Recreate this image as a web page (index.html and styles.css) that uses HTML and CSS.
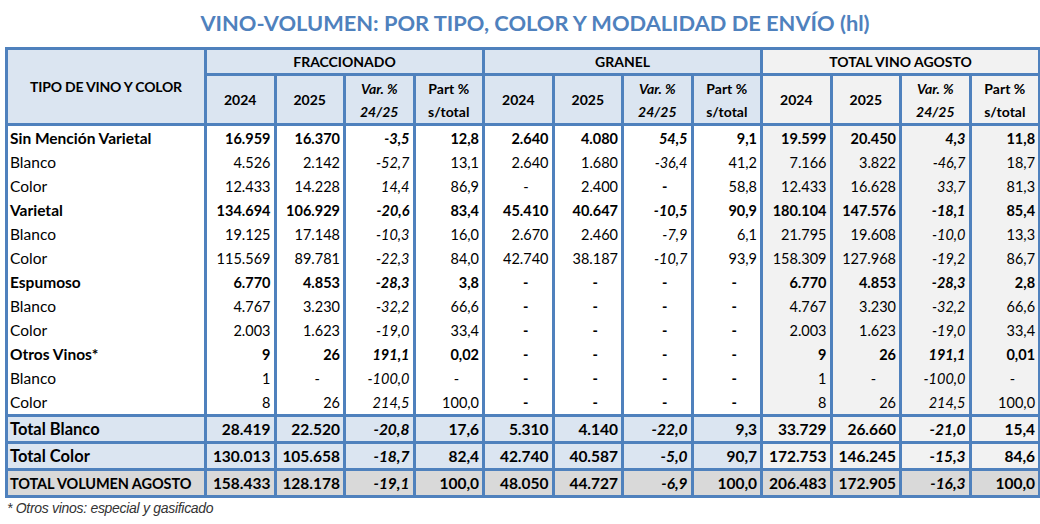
FILE: index.html
```html
<!DOCTYPE html>
<html lang="es">
<head>
<meta charset="utf-8">
<title>Vino-volumen</title>
<link rel="stylesheet" href="styles.css">
</head>
<body>
<div class="page">
  <h1 class="title">VINO-VOLUMEN: POR TIPO, COLOR Y MODALIDAD DE ENVÍO (hl)</h1>
  <table class="grid">
    <colgroup>
      <col class="c-name">
      <col class="c-n"><col class="c-n"><col class="c-n"><col class="c-n">
      <col class="c-n"><col class="c-n"><col class="c-n"><col class="c-n">
      <col class="c-n"><col class="c-n"><col class="c-n"><col class="c-n">
    </colgroup>
    <thead>
      <tr class="h1">
        <th rowspan="2" class="hname">TIPO DE VINO Y COLOR</th>
        <th colspan="4">FRACCIONADO</th>
        <th colspan="4">GRANEL</th>
        <th colspan="4" class="tg">TOTAL VINO AGOSTO</th>
      </tr>
      <tr class="h2">
        <th>2024</th><th>2025</th><th class="hv">Var. %<br>24/25</th><th>Part %<br>s/total</th>
        <th>2024</th><th>2025</th><th class="hv">Var. %<br>24/25</th><th>Part %<br>s/total</th>
        <th class="tg">2024</th><th class="tg">2025</th><th class="tg hv">Var. %<br>24/25</th><th class="tg">Part %<br>s/total</th>
      </tr>
    </thead>
    <tbody class="data">
      <tr class="b">
        <td class="name">Sin Mención Varietal</td>
        <td>16.959</td><td>16.370</td><td class="v">-3,5</td><td>12,8</td>
        <td>2.640</td><td>4.080</td><td class="v">54,5</td><td>9,1</td>
        <td class="t">19.599</td><td class="t">20.450</td><td class="t v">4,3</td><td class="t">11,8</td>
      </tr>
      <tr>
        <td class="name">Blanco</td>
        <td>4.526</td><td>2.142</td><td class="v">-52,7</td><td>13,1</td>
        <td>2.640</td><td>1.680</td><td class="v">-36,4</td><td>41,2</td>
        <td class="t">7.166</td><td class="t">3.822</td><td class="t v">-46,7</td><td class="t">18,7</td>
      </tr>
      <tr>
        <td class="name">Color</td>
        <td>12.433</td><td>14.228</td><td class="v">14,4</td><td>86,9</td>
        <td class="d">-</td><td>2.400</td><td class="d bd">-</td><td>58,8</td>
        <td class="t">12.433</td><td class="t">16.628</td><td class="t v">33,7</td><td class="t">81,3</td>
      </tr>
      <tr class="b">
        <td class="name">Varietal</td>
        <td>134.694</td><td>106.929</td><td class="v">-20,6</td><td>83,4</td>
        <td>45.410</td><td>40.647</td><td class="v">-10,5</td><td>90,9</td>
        <td class="t">180.104</td><td class="t">147.576</td><td class="t v">-18,1</td><td class="t">85,4</td>
      </tr>
      <tr>
        <td class="name">Blanco</td>
        <td>19.125</td><td>17.148</td><td class="v">-10,3</td><td>16,0</td>
        <td>2.670</td><td>2.460</td><td class="v">-7,9</td><td>6,1</td>
        <td class="t">21.795</td><td class="t">19.608</td><td class="t v">-10,0</td><td class="t">13,3</td>
      </tr>
      <tr>
        <td class="name">Color</td>
        <td>115.569</td><td>89.781</td><td class="v">-22,3</td><td>84,0</td>
        <td>42.740</td><td>38.187</td><td class="v">-10,7</td><td>93,9</td>
        <td class="t">158.309</td><td class="t">127.968</td><td class="t v">-19,2</td><td class="t">86,7</td>
      </tr>
      <tr class="b">
        <td class="name">Espumoso</td>
        <td>6.770</td><td>4.853</td><td class="v">-28,3</td><td>3,8</td>
        <td class="d">-</td><td class="d">-</td><td class="d">-</td><td class="d">-</td>
        <td class="t">6.770</td><td class="t">4.853</td><td class="t v">-28,3</td><td class="t">2,8</td>
      </tr>
      <tr>
        <td class="name">Blanco</td>
        <td>4.767</td><td>3.230</td><td class="v">-32,2</td><td>66,6</td>
        <td class="d bd">-</td><td class="d bd">-</td><td class="d bd">-</td><td class="d bd">-</td>
        <td class="t">4.767</td><td class="t">3.230</td><td class="t v">-32,2</td><td class="t">66,6</td>
      </tr>
      <tr>
        <td class="name">Color</td>
        <td>2.003</td><td>1.623</td><td class="v">-19,0</td><td>33,4</td>
        <td class="d bd">-</td><td class="d bd">-</td><td class="d bd">-</td><td class="d bd">-</td>
        <td class="t">2.003</td><td class="t">1.623</td><td class="t v">-19,0</td><td class="t">33,4</td>
      </tr>
      <tr class="b">
        <td class="name">Otros Vinos*</td>
        <td>9</td><td>26</td><td class="v">191,1</td><td>0,02</td>
        <td class="d">-</td><td class="d">-</td><td class="d">-</td><td class="d">-</td>
        <td class="t">9</td><td class="t">26</td><td class="t v">191,1</td><td class="t">0,01</td>
      </tr>
      <tr>
        <td class="name">Blanco</td>
        <td>1</td><td class="d">-</td><td class="v">-100,0</td><td class="d">-</td>
        <td class="d bd">-</td><td class="d bd">-</td><td class="d bd">-</td><td class="d bd">-</td>
        <td class="t">1</td><td class="t d">-</td><td class="t v">-100,0</td><td class="t d">-</td>
      </tr>
      <tr class="last">
        <td class="name">Color</td>
        <td>8</td><td>26</td><td class="v">214,5</td><td>100,0</td>
        <td class="d bd">-</td><td class="d bd">-</td><td class="d bd">-</td><td class="d bd">-</td>
        <td class="t">8</td><td class="t">26</td><td class="t v">214,5</td><td class="t">100,0</td>
      </tr>
    </tbody>
    <tbody class="totals">
      <tr class="sub">
        <td class="name">Total Blanco</td>
        <td>28.419</td><td>22.520</td><td class="v">-20,8</td><td>17,6</td>
        <td>5.310</td><td>4.140</td><td class="v">-22,0</td><td>9,3</td>
        <td class="t">33.729</td><td class="t">26.660</td><td class="t v">-21,0</td><td class="t">15,4</td>
      </tr>
      <tr class="sub">
        <td class="name">Total Color</td>
        <td>130.013</td><td>105.658</td><td class="v">-18,7</td><td>82,4</td>
        <td>42.740</td><td>40.587</td><td class="v">-5,0</td><td>90,7</td>
        <td class="t">172.753</td><td class="t">146.245</td><td class="t v">-15,3</td><td class="t">84,6</td>
      </tr>
      <tr class="grand">
        <td class="name">TOTAL VOLUMEN AGOSTO</td>
        <td>158.433</td><td>128.178</td><td class="v">-19,1</td><td>100,0</td>
        <td>48.050</td><td>44.727</td><td class="v">-6,9</td><td>100,0</td>
        <td>206.483</td><td>172.905</td><td class="v">-16,3</td><td>100,0</td>
      </tr>
    </tbody>
  </table>
  <p class="note">* Otros vinos: especial y gasificado</p>
</div>
</body>
</html>
```
FILE: styles.css
```css
html, body {
  margin: 0;
  padding: 0;
  background: #ffffff;
}

.page {
  width: 1040px;
  height: 524px;
  padding: 0 0 0 5px;
  box-sizing: border-box;
  font-family: Lato, "Open Sans", sans-serif;
  color: #000;
}

.title {
  margin: 0;
  height: 47px;
  line-height: 46px;
  text-align: center;
  font-size: 21.8px;
  font-weight: 700;
  color: #4f81bd;
  padding: 0 3px 0 28px;
}

.grid {
  border-collapse: collapse;
  table-layout: fixed;
  width: 1033px;
  font-size: 14.5px;
}

.c-name { width: 199px; }
.c-n { width: 69.5px; }

.grid th,
.grid td {
  border: 3px solid #4f81bd;
  padding: 0;
}

.grid th {
  background: #dbe5f1;
  font-weight: 700;
  text-align: center;
  vertical-align: middle;
  font-size: 14px;
}

.grid th.tg { background: #f2f2f2; }
.grid th.hv { font-style: italic; }

.h1 { height: 26px; }
.h2 { height: 50px; }
.h2 th { line-height: 23px; }

.hname { letter-spacing: -0.2px; }

.grid td {
  text-align: right;
  padding-right: 3px;
  white-space: nowrap;
  vertical-align: middle;
}

.data td {
  border-top: 0;
  border-bottom: 0;
  height: 24px;
}

.data tr:first-child td { border-top: 3px solid #4f81bd; }

.grid td.name {
  text-align: left;
  padding-left: 2px;
  padding-right: 0;
  font-size: 15.5px;
}

.grid td.t { background: #f2f2f2; }
.grid td.v { font-style: italic; }
.grid td.d { padding-right: 23px; }
.grid td.bd { font-weight: 700; }

.b td { font-weight: 700; }

.totals td {
  font-weight: 700;
  font-size: 15.5px;
  height: 24px;
}

.sub td { background: #dbe5f1; }
.grid .sub td.name { font-size: 16.5px; }

.grand td { background: #d9d9d9; }
.grid .grand td.name { font-size: 14.5px; letter-spacing: -0.1px; }

.note {
  margin: 2px 0 0 2px;
  font-family: "Liberation Sans", Arial, sans-serif;
  font-style: italic;
  font-size: 14px;
  color: #333;
  letter-spacing: -0.3px;
}
```
